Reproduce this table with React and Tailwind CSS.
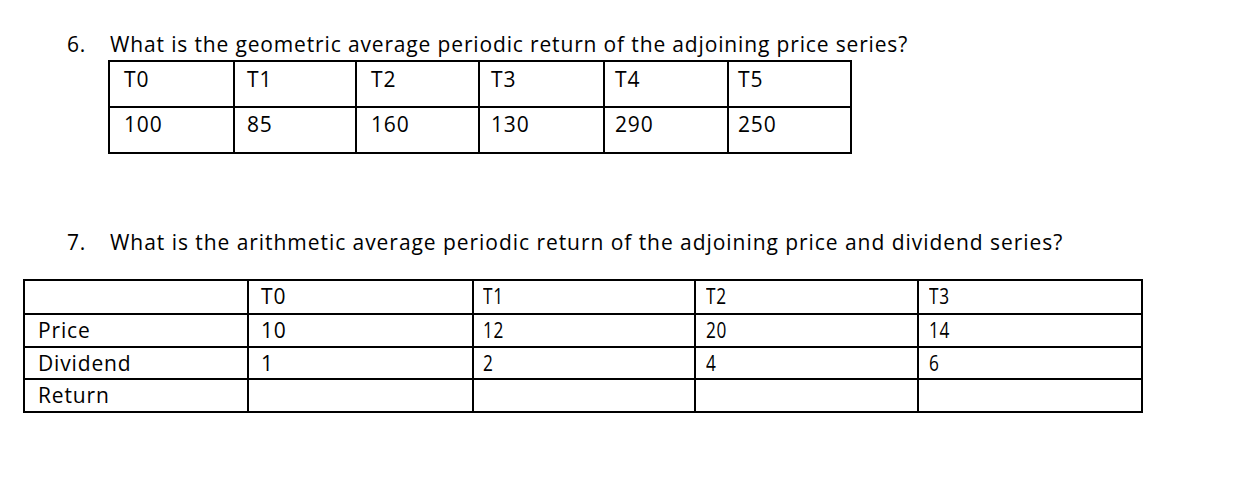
import React from "react";

const font = { fontFamily: '"Open Sans", "Noto Sans", sans-serif' };

function Table1() {
  const widths = ["w-[125px]", "w-[122px]", "w-[123px]", "w-[125px]", "w-[124px]", "w-[123px]"];
  const pads = ["pl-[14px]", "pl-[12px]", "pl-[14px]", "pl-[11px]", "pl-[10px]", "pl-[9px]"];
  const rowPad = ["pt-[5px]", "pt-[4px]"];
  const rows = [
    ["T0", "T1", "T2", "T3", "T4", "T5"],
    ["100", "85", "160", "130", "290", "250"],
  ];
  return (
    <div className="ml-[108px] mt-[4px] w-max border-l-2 border-t-2 border-black">
      {rows.map((r, i) => (
        <div key={i} className="flex">
          {r.map((c, j) => (
            <div
              key={j}
              className={`${widths[j]} ${pads[j]} ${rowPad[i]} h-[46px] border-r-2 border-b-2 border-black`}
            >
              {c}
            </div>
          ))}
        </div>
      ))}
    </div>
  );
}

function Table2() {
  const widths = ["w-[224px]", "w-[225px]", "w-[222px]", "w-[223px]", "w-[224px]"];
  const pads = ["pl-[13px]", "pl-[12px]", "pl-[9px]", "pl-[10px]", "pl-[10px]"];
  const heights = ["h-[34px]", "h-[33px]", "h-[32px]", "h-[33px]"];
  const rows = [
    ["", "T0", "T1", "T2", "T3"],
    ["Price", "10", "12", "20", "14"],
    ["Dividend", "1", "2", "4", "6"],
    ["Return", "", "", "", ""],
  ];
  return (
    <div className="ml-[23px] mt-[25px] w-max border-l-2 border-t-2 border-black">
      {rows.map((r, i) => (
        <div key={i} className="flex">
          {r.map((c, j) => (
            <div
              key={j}
              className={`${widths[j]} ${pads[j]} ${heights[i]} pt-[3px] border-r-2 border-b-2 border-black`}
            >
              {j >= 2 ? (
                <span className="inline-block origin-left scale-x-[0.82]">{c}</span>
              ) : (
                c
              )}
            </div>
          ))}
        </div>
      ))}
    </div>
  );
}

export default function App() {
  return (
    <div
      className="w-[1246px] h-[490px] bg-white text-black text-[21px] leading-[24px] tracking-[0.85px] overflow-hidden"
      style={font}
    >
      <div className="pt-[32px] ml-[67px] flex">
        <span className="w-[43px]">6.</span>
        <span>What is the geometric average periodic return of the adjoining price series?</span>
      </div>
      <Table1 />
      <div className="mt-[76px] ml-[67px] flex">
        <span className="w-[43px]">7.</span>
        <span className="tracking-[0.95px]">
          What is the arithmetic average periodic return of the adjoining price and dividend series?
        </span>
      </div>
      <Table2 />
    </div>
  );
}
